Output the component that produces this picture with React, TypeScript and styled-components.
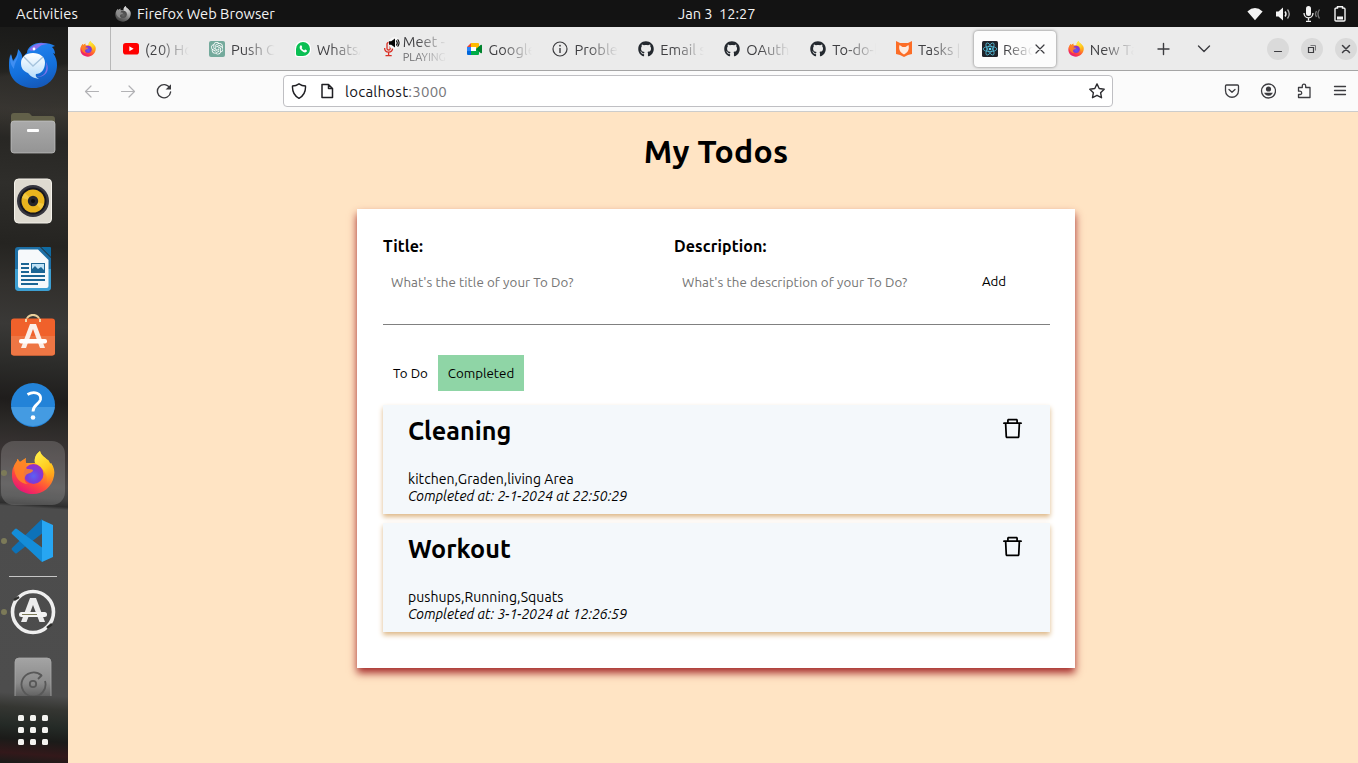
import React from "react";
import styled, { createGlobalStyle, css } from "styled-components";
import { FaGithub } from "react-icons/fa";
import { AiOutlineDelete } from "react-icons/ai";
import { SiOpenai } from "react-icons/si";

const GlobalStyle = createGlobalStyle`
  * { box-sizing: border-box; }
  body { margin: 0; overflow: hidden; font-family: Ubuntu, "Noto Sans", "Open Sans", sans-serif; }
  button, input { font: inherit; border: 0; background: none; padding: 0; margin: 0; outline: 0; }
  svg { display: block; flex: none; }
`;

/* ---------- Desktop shell ---------- */

const Desktop = styled.div`
  width: 1358px;
  height: 763px;
  display: grid;
  grid-template: 27px 736px / 68px 1290px;
  overflow: hidden;
`;

const TopBar = styled.header`
  grid-column: 1 / 3;
  display: grid;
  grid-template-columns: 1fr auto 1fr;
  align-items: center;
  background: #131313;
  color: #f2f2f2;
  font-size: 14.667px;
  line-height: 27px;
`;

const TopLeft = styled.div`
  display: flex;
  align-items: center;
  padding-left: 16px;
  letter-spacing: 0.2px;
`;

const ActiveApp = styled.div`
  display: flex;
  align-items: center;
  gap: 6px;
  margin-left: 37px;
  letter-spacing: 0;
`;

const Clock = styled.div`
  white-space: pre;
  padding-left: 75px;
  width: 153px;
  margin-right: -1px;
  letter-spacing: -0.05px;
`;

const Status = styled.div`
  display: flex;
  justify-content: flex-end;
  align-items: center;
  gap: 12px;
  padding-right: 9px;
`;

const Dock = styled.aside`
  display: flex;
  flex-direction: column;
  align-items: center;
  padding-top: 4px;
  background:
    linear-gradient(172deg, transparent 0 45px, #35333080 50px 80px, transparent 96px) 0 0 / 68px 130px no-repeat,
    linear-gradient(184deg, #1a1a19 0, #22221f 45px, #3a3732 85px, #282724 115px, #2f2e2b 160px, #252421 220px, #32302d 260px, #3a3937 300px, #2b2b29 340px, #1f1d1c 375px, #2c2a28 400px, #3b3535 430px, #4a4848 460px, #3f3f3f 472px, #2e2e2e 479px, #4c4c4c 482px, #4d4d4d 668px, #353632 682px, #242a26 700px, #1b1b19 714px, #33181a 728px, #1b1b19 738px);
`;

const DockSlot = styled.div<{ $running?: boolean; $clip?: boolean }>`
  position: relative;
  width: 68px;
  height: ${(p) => (p.$clip ? "50px" : "68px")};
  flex: none;
  display: flex;
  align-items: ${(p) => (p.$clip ? "flex-start" : "center")};
  justify-content: center;
  overflow: hidden;
  padding: ${(p) => (p.$clip ? "10px 2px 0 0" : "0 2px 0 0")};
  ${(p) =>
    p.$running &&
    css`
      &::before {
        content: "";
        position: absolute;
        left: 1px;
        top: 31px;
        width: 6px;
        height: 6px;
        border-radius: 50%;
        background: #7c7a58;
      }
    `}
`;

const DockHighlight = styled.div`
  width: 64px;
  height: 64px;
  border-radius: 13px;
  display: flex;
  align-items: center;
  justify-content: center;
  background: #ffffff2b;
`;

const DockRule = styled.div`
  width: 48px;
  height: 1px;
  margin: 1px 2px 1px 0;
  background: #c6c6c6;
  flex: none;
`;

const AppGrid = styled.div`
  display: grid;
  grid-template-columns: repeat(3, 6px);
  gap: 6px;
  margin: 19px 2px 0 0;
`;

const AppDot = styled.i`
  width: 6px;
  height: 6px;
  border-radius: 1.5px;
  background: #f3f3f0;
`;

/* ---------- Browser chrome ---------- */

const Browser = styled.div`
  display: flex;
  flex-direction: column;
  background: #fbfbfb;
  min-width: 0;
`;

const TabStrip = styled.div`
  height: 44px;
  display: flex;
  align-items: center;
  background: #ebebeb;
  border-bottom: 1px solid #a5a5a5;
`;

const PinnedTab = styled.div`
  width: 43px;
  height: 43px;
  display: flex;
  align-items: center;
  padding-left: 12px;
  border-right: 1px solid #b8b8b8;
  margin-right: 4px;
`;

const Tab = styled.div<{ $active?: boolean }>`
  width: 81.9px;
  height: 36px;
  flex: none;
  margin-right: 4px;
  padding: 0 8px;
  display: flex;
  align-items: center;
  gap: 6px;
  border-radius: 4px;
  color: #3f3f42;
  ${(p) =>
    p.$active &&
    css`
      gap: 5px;
      padding-right: 10px;
      background: #fcfcfc;
      box-shadow: 0 0 3px #00000080;
    `}
`;

const TabIcon = styled.span`
  position: relative;
  width: 16px;
  height: 16px;
  flex: none;
`;

const TabText = styled.div<{ $short?: boolean; $double?: boolean }>`
  flex: 1;
  min-width: 0;
  overflow: hidden;
  white-space: nowrap;
  padding-top: ${(p) => (p.$double ? "0" : "2px")};
  margin-right: ${(p) => (p.$short ? "-4px" : "0")};
  font-size: 14.667px;
  line-height: 20px;
  mask-image: linear-gradient(to right, #000 ${(p) => (p.$short ? "10%" : "30%")}, transparent 100%);
`;

const TabStatus = styled.div`
  font-size: 11px;
  line-height: 13px;
  color: #6b6b6e;
`;

const TitleLine = styled.div<{ $tight?: boolean }>`
  line-height: ${(p) => (p.$tight ? "18px" : "20px")};
`;

const SoundBadge = styled.span`
  position: absolute;
  left: 7px;
  top: -5px;
`;

const TabActions = styled.div`
  display: flex;
  align-items: center;
  gap: 25px;
  margin-left: 9px;
`;

const WindowButtons = styled.div`
  display: flex;
  gap: 12px;
  margin-left: 55px;
`;

const WindowButton = styled.button`
  width: 22px;
  height: 22px;
  flex: none;
  border-radius: 50%;
  background: #dadada;
  display: flex;
  align-items: center;
  justify-content: center;
`;

const NavBar = styled.div`
  height: 41px;
  display: flex;
  align-items: center;
  border-bottom: 1px solid #cccccc;
  padding: 0 10px 0 16px;
`;

const NavButtons = styled.div`
  display: flex;
  gap: 20px;
  width: 199px;
`;

const UrlBar = styled.div`
  width: 830px;
  height: 32px;
  display: flex;
  align-items: center;
  border: 1px solid #bfbfc3;
  border-radius: 4px;
  background: #fff;
  padding: 0 7px;
`;

const UrlPageIcon = styled.span`
  margin-left: 12px;
`;

const UrlText = styled.div`
  flex: 1;
  margin-left: 10px;
  padding-top: 1px;
  font-size: 15px;
  letter-spacing: 0.25px;
  line-height: 20px;
  color: #15141a;
`;

const Port = styled.span`
  color: #76767a;
`;

const Tools = styled.div`
  display: flex;
  gap: 20px;
  margin-left: auto;
`;

/* ---------- Todo page ---------- */

const Page = styled.main`
  flex: 1;
  background: #ffe4c4;
  color: #000;
  display: flex;
  flex-direction: column;
  align-items: center;
  padding: 19px 0 0 6px;
`;

const PageTitle = styled.h1`
  margin: 0 0 38px;
  font-size: 32px;
  line-height: 40px;
  letter-spacing: 0.2px;
`;

const Card = styled.section`
  width: 718px;
  height: 459px;
  padding: 27px 25px 36px 26px;
  background: #fff;
  box-shadow: 0 5px 8px 0 brown;
`;

const Form = styled.form`
  display: grid;
  grid-template-columns: 291px 289px 1fr;
  height: 89px;
  border-bottom: 1px solid gray;
`;

const Field = styled.label`
  display: flex;
  flex-direction: column;
  gap: 8px;
  font-weight: 700;
  font-size: 16px;
  line-height: 20px;
  letter-spacing: 0.12px;
`;

const TextInput = styled.input`
  height: 36px;
  width: 260px;
  padding: 0 8px;
  font-weight: 400;
  font-size: 13.333px;
  letter-spacing: 0.06px;
  &::placeholder { color: #757575; opacity: 1; }
`;

const AddButton = styled.button`
  height: 36px;
  width: 44px;
  margin: 27px 0 0 9px;
  font-size: 13.333px;
`;

const Filters = styled.div`
  display: flex;
  margin: 30px 0 14px;
`;

const FilterButton = styled.button<{ $width: number; $active?: boolean }>`
  width: ${(p) => p.$width}px;
  height: 36px;
  font-size: 13.333px;
  background: ${(p) => (p.$active ? "#8fd5a6" : "transparent")};
`;

const List = styled.div`
  display: flex;
  flex-direction: column;
  gap: 9px;
`;

const Item = styled.article`
  height: 109px;
  display: flex;
  justify-content: space-between;
  padding: 9px 25px 9px;
  background: #f4f8fb;
  box-shadow: 0 3px 5px 0 burlywood;
`;

const ItemTitle = styled.h3`
  margin: 0 0 23px;
  font-size: 25.2px;
  line-height: 34px;
  letter-spacing: 0.03px;
`;

const ItemLine = styled.p<{ $italic?: boolean }>`
  margin: 0;
  font-size: 14px;
  line-height: 17px;
  font-style: ${(p) => (p.$italic ? "italic" : "normal")};
  letter-spacing: ${(p) => (p.$italic ? "0" : "0.06px")};
`;

const DeleteIcon = styled(AiOutlineDelete)`
  margin-top: 2px;
  font-size: 25px;
`;

/* ---------- Icons ---------- */

function Firefox({ size, gray }: { size: number; gray?: boolean }) {
  const id = React.useId().replace(/:/g, "");
  return (
    <svg width={size} height={size} viewBox="0 0 44 44" style={gray ? { filter: "grayscale(1) brightness(0.95)" } : undefined}>
      <defs>
        <linearGradient id={`${id}b`} x1=".8" y1="0" x2=".25" y2="1">
          <stop offset="0" stopColor="#ffe226" />
          <stop offset=".4" stopColor="#ff9a1f" />
          <stop offset=".7" stopColor="#ff4a3d" />
          <stop offset="1" stopColor="#e5107e" />
        </linearGradient>
        <linearGradient id={`${id}t`} x1="0" y1="0" x2=".4" y2="1">
          <stop offset="0" stopColor="#fff44f" />
          <stop offset=".6" stopColor="#ffcb1f" />
          <stop offset="1" stopColor="#ff980e" stopOpacity="0" />
        </linearGradient>
        <radialGradient id={`${id}g`} cx=".5" cy=".6" r=".6">
          <stop offset="0" stopColor="#5a62f5" />
          <stop offset=".5" stopColor="#7540dc" />
          <stop offset="1" stopColor="#a12cc0" />
        </radialGradient>
      </defs>
      <path d="M3 15c1-2 2-4 3-5 0-1 0-2 1-2 0 1 1 2 2 3 2-1 4-3 6-4-1 2 0 4 0 5l9 0c-1-5 1-9 5-12 1 5 6 7 9 10 0 1 1 2 1 3l1-1c3 4 4 8 3 13-2 11-11 18-21 18C10 43 1 35 1 25c0-4 0-7 2-10z" fill={`url(#${id}b)`} />
      <path d="M24 12c-1-5 1-9 5-12 1 5 6 7 9 10 0 1 1 2 1 3l1-1c3 6 3 13 1 19-1 3-4 5-7 6 3-5 3-12-1-17-2-3-6-5-9-8z" fill={`url(#${id}t)`} />
      <circle cx="22.500" cy="23" r="10" fill={`url(#${id}g)`} />
      <path d="M3 15c1-2 2-4 3-5 0-1 0-2 1-2 0 1 1 2 2 3 2-1 4-3 6-4-1 2 0 5 1 7-1 2-1 3 0 4 2 0 5 0 6 1 0 3-5 3-7 5-2 3-2 7 2 9-8 0-14-7-14-18z" fill="#ff8426" opacity=".85" />
    </svg>
  );
}

const Thunderbird = () => (
  <svg width="48" height="48" viewBox="0 0 48 48">
    <defs>
      <linearGradient id="tbBody" x1=".3" y1="0" x2=".6" y2="1">
        <stop offset="0" stopColor="#2585f0" />
        <stop offset=".6" stopColor="#1370dc" />
        <stop offset="1" stopColor="#1558b8" />
      </linearGradient>
      <linearGradient id="tbMail" x1="0" y1="0" x2="0" y2="1">
        <stop offset="0" stopColor="#fff" />
        <stop offset="1" stopColor="#b5dcfa" />
      </linearGradient>
    </defs>
    <path d="M9 8c4 4 5 8 4 12 1-4 3-7 5-8 0-6 8-11 16-10 5 0 9 1 12 3l-3 1c2 2 3 4 3 7l-2-1c3 4 4 8 4 12 0 13-10 23-23 23C11 47 0 39 0 25c0-5 0-9 2-12l2 7c2-3 5-6 5-12z" fill="url(#tbBody)" />
    <path d="M20 9c4-6 11-8 19-6-8 0-9 4-13 6-2 1-4 1-6 0z" fill="#8d70ee" />
    <path d="M2 14l2 7c3-3 5-6 5-12 2 8-4 12-4 19-3-4-5-8-3-14z" fill="#3f8ef2" />
    <path d="M26 36c8 0 13-4 11-15 5 9-1 16-11 15z" fill="#7f73e8" />
    <path d="M24 12c7 0 12 4 12 9.500 0 7-4 11.500-9 11.500-1 2 1 4 3 5-6-1-9-3-11-6-5-2-7-5-7-10 0-6 5-10 12-10z" fill="url(#tbMail)" />
    <path d="M15 16l9 9 10-9" fill="none" stroke="#a5c3dd" strokeWidth="1.300" />
    <circle cx="25" cy="8" r="1.400" fill="#fff" />
  </svg>
);

const Files = () => (
  <svg width="46" height="42" viewBox="0 0 46 42">
    <defs>
      <linearGradient id="flF" x1="0" y1="0" x2="0" y2="1">
        <stop offset="0" stopColor="#aaaaaa" />
        <stop offset="1" stopColor="#949494" />
      </linearGradient>
    </defs>
    <path d="M1 10V4q0-3 3-3h14q2 0 3 2l1 1h20q3 0 3 3v6H1z" fill="#626049" />
    <rect x="1" y="9" width="44" height="32" rx="3" fill="url(#flF)" stroke="#c4c4c4" strokeWidth=".7" />
    <rect x="17" y="17" width="12" height="3" rx="1" fill="#fff" />
  </svg>
);

const Rhythmbox = () => (
  <svg width="38" height="46" viewBox="0 0 38 46">
    <rect x=".5" y="1" width="37" height="44" rx="4" fill="#dedad0" stroke="#f4f1ea" />
    <circle cx="19" cy="23" r="16" fill="#36363f" />
    <circle cx="19" cy="23" r="13.500" fill="#17171d" />
    <circle cx="19" cy="23" r="11.500" fill="#e9b41e" />
    <path d="M19 23L8 20a11.500 11.500 0 0 1 3-5zM19 23l11 3a11.500 11.500 0 0 1-3 5z" fill="#f9d657" opacity=".6" />
    <circle cx="19" cy="23" r="5.200" fill="#25252a" />
    <circle cx="19" cy="23" r="2" fill="#0c0c0e" />
  </svg>
);

const Writer = () => (
  <svg width="38" height="46" viewBox="0 0 38 46">
    <path d="M4 1h22l11 11v29q0 4-4 4H5q-4 0-4-4V4q0-3 3-3z" fill="#1d6fa5" />
    <path d="M1 23h36v18q0 4-4 4H5q-4 0-4-4z" fill="#3d9fd2" />
    <path d="M6 3.500h18L34.500 14v26q0 2-2 2H6q-2 0-2-2V5.500q0-2 2-2z" fill="#f6f9fb" />
    <path d="M27 1h9q1 0 1 1v9z" fill="#0f6ba3" />
    <g fill="#1b6594">
      <path d="M7 17h8v2H7zM7 21h8v2H7zM7 25h8v2H7zM7 29h24v2H7zM7 33h24v2H7zM7 37h17v2H7z" />
    </g>
    <rect x="17.500" y="17.500" width="13" height="9" fill="#bfe2f6" stroke="#1b6594" />
    <path d="M18 26v-3l3-3 3 3 3-2 3 3v2z" fill="#1b6594" />
  </svg>
);

const Software = () => (
  <svg width="46" height="46" viewBox="0 3 46 46">
    <path d="M16 11c0-9.500 14-9.500 14 0" fill="none" stroke="#e9cf9b" strokeWidth="2" />
    <rect x="1" y="7.500" width="44" height="37" rx="3" fill="#f0612b" />
    <path d="M1 25h44v16.500q0 3-3 3H4q-3 0-3-3z" fill="#ee7644" />
    <path d="M16 8v3M30 8v3" stroke="#f0d9ae" strokeWidth="2" />
    <path d="M20 13h6l9 24h-5l-7-19-7 19h-5z" fill="#fbeee7" />
    <rect x="9" y="28" width="28" height="4.500" rx="2" fill="#fff" />
  </svg>
);

const Help = () => (
  <svg width="46" height="46" viewBox="0 0 46 46">
    <circle cx="23" cy="23" r="22" fill="#2383d8" />
    <path d="M1.200 25h43.600A22 22 0 0 1 1.200 25z" fill="#449be2" />
    <path d="M17.500 12.500c7-4 14-1 13 5-1 5-7.500 5-7.500 12" fill="none" stroke="#fff" strokeWidth="2.800" />
    <circle cx="23" cy="35.500" r="2.300" fill="#fff" />
  </svg>
);

const VsCode = () => (
  <svg width="46" height="46" viewBox="0 0 46 46">
    <path d="M32 1L2 30q-1 1 0 2l3 3q1 1 2 0L34 14z" fill="#0d72b8" />
    <path d="M7 11q-1-1-2 0l-3 3q-1 1 0 2l30 28 2-13z" fill="#148dd8" />
    <path d="M32 2l11 5v32l-11 5z" fill="#27a6f2" />
  </svg>
);

const Updater = () => (
  <svg width="48" height="48" viewBox="0 0 48 48">
    <circle cx="24" cy="24" r="20.500" fill="none" stroke="#efefef" strokeWidth="3.600" />
    <path d="M5 12l5 -3M38 40l5-4" stroke="#2e2e2c" strokeWidth="2.500" />
    <path d="M21 10h6l9 24h-5.500L24 17l-6.500 17H12z" fill="#ececec" />
    <rect x="10" y="24" width="28" height="5" rx="2.500" fill="#f4f4f4" />
    <path d="M13 26.500h15" stroke="#7c7a58" />
  </svg>
);

const Disks = () => (
  <svg width="38" height="52" viewBox="0 0 38 52">
    <defs>
      <linearGradient id="dkF" x1="0" y1="0" x2="0" y2="1">
        <stop offset="0" stopColor="#a4a4a4" />
        <stop offset=".5" stopColor="#8a8a8a" />
        <stop offset=".76" stopColor="#626262" />
      </linearGradient>
    </defs>
    <path d="M1 52V6q0-4 4-4h28q4 0 4 4v46z" fill="url(#dkF)" stroke="#a9a9a9" strokeWidth=".8" />
    <g fill="none" stroke="#585858" strokeWidth="1.800">
      <path d="M27.500 19.500A12 12 0 1 0 31 25" />
      <circle cx="19" cy="28" r="3.200" />
      <path d="M24 23l4-4" />
    </g>
  </svg>
);

const YouTube = () => (
  <svg width="16" height="16" viewBox="0 0 16 16">
    <rect x="0" y="2" width="16" height="11.500" rx="2.800" fill="#f00" />
    <path d="M6.300 5.300v5l4.300-2.500z" fill="#fff" />
  </svg>
);

const ChatBox = styled.span`
  width: 16px;
  height: 16px;
  border-radius: 2px;
  display: grid;
  place-items: center;
  background: #74aa9c;
  color: #fff;
  font-size: 12.5px;
`;

const WhatsBox = styled.span`
  width: 16px;
  height: 16px;
  display: grid;
  place-items: center;
  border-radius: 7px 7px 7px 2px;
  background: #fff;
`;

const WhatsDisc = styled.span`
  width: 14px;
  height: 14px;
  display: grid;
  place-items: center;
  border-radius: 50% 50% 50% 15%;
  background: #0abf53;
`;

const WhatsApp = () => (
  <WhatsBox>
    <WhatsDisc>
      <svg width="14" height="14" viewBox="0 0 14 14">
        <path d="M4.600 3.300q.8-.4 1.200.6l.4 1q.1.500-.6 1.200 1 1.700 2.600 2.300.7-1 1.200-.8l1.200.6q.7.400.2 1.200-1.300 1.600-3.400.7Q4.600 8.700 3.700 6.200q-.4-1.900.9-2.900z" fill="#fff" />
      </svg>
    </WhatsDisc>
  </WhatsBox>
);

const MicRed = () => (
  <svg width="16" height="16" viewBox="0 0 16 16" fill="none" stroke="#d93025" strokeWidth="1.300">
    <rect x="6" y="1.500" width="3.200" height="7.500" rx="1.600" />
    <path d="M3.600 7c0 5.500 8 5.500 8 0M7.600 11.200v3.200M4.500 14.600h6.200" />
  </svg>
);

const Sound = () => (
  <svg width="14" height="14" viewBox="0 0 14 14">
    <circle cx="6.500" cy="7" r="6" fill="#f7f7f7" />
    <path d="M1 5.200h2.200L7 2.500v9L3.200 8.800H1z" fill="#050505" />
    <path d="M8.300 4.500q2 2.500 0 5M9.600 3.400q3 3.600 0 7.200" stroke="#050505" fill="none" strokeWidth="1.100" />
  </svg>
);

const Meet = () => (
  <svg width="16" height="16" viewBox="0 0 16 16">
    <path d="M0 6l4-4v4z" fill="#ea4335" />
    <path d="M0 6h4v5H0z" fill="#2684fc" />
    <path d="M4 2h7q1 0 1 1v3l-3 2V6H4z" fill="#ffba00" />
    <path d="M0 10h4v4H1q-1 0-1-1z" fill="#0066da" />
    <path d="M4 10h5V8l3-2v7q0 1-1 1H4z" fill="#00ac47" />
    <path d="M9 8l4.500-4q1.500-.8 1.500.5v7q0 1.300-1.500.5z" fill="#00832d" />
    <path d="M4 6h5v4H4z" fill="#fff" />
  </svg>
);

const Info = () => (
  <svg width="16" height="16" viewBox="0 0 16 16">
    <circle cx="8" cy="8" r="7" fill="none" stroke="#3c3c3f" strokeWidth="1.200" />
    <path d="M8 7v5" stroke="#3c3c3f" strokeWidth="1.400" />
    <circle cx="8" cy="4.700" r=".9" fill="#3c3c3f" />
  </svg>
);

const Fox = () => (
  <svg width="16" height="16" viewBox="0 0 16 16">
    <path d="M0 0l4 2h8l4-2v13l-4 1-4 2-4-2-4-1z" fill="#fc6d26" />
    <path d="M3.500 4l3 2h3l3-2c1 4 0 7-4.500 9.500C3.500 11 2.500 8 3.500 4z" fill="#fdebe0" />
  </svg>
);

const ReactMark = () => (
  <svg width="16" height="16" viewBox="0 0 16 16">
    <rect width="16" height="16" rx="1.500" fill="#20232a" />
    <g fill="none" stroke="#53bcd8" strokeWidth=".8">
      <ellipse cx="8" cy="8" rx="6.800" ry="2.600" />
      <ellipse cx="8" cy="8" rx="6.800" ry="2.600" transform="rotate(60 8 8)" />
      <ellipse cx="8" cy="8" rx="6.800" ry="2.600" transform="rotate(120 8 8)" />
    </g>
    <circle cx="8" cy="8" r="1.300" fill="#61dafb" />
  </svg>
);

function Line({ d, color = "#3c3c40", width = 1.3, size = 16 }: { d: string; color?: string; width?: number; size?: number }) {
  return (
    <svg width={size} height={size} viewBox={`0 0 ${size} ${size}`} fill="none" stroke={color} strokeWidth={width} strokeLinecap="round" strokeLinejoin="round">
      <path d={d} />
    </svg>
  );
}

const Reload = () => (
  <svg width="16" height="16" viewBox="0 0 16 16">
    <path d="M13.800 5A6.600 6.600 0 1 0 14.600 9" fill="none" stroke="#3a3a3e" strokeWidth="1.400" strokeLinecap="round" />
    <path d="M15 1.200V6.600H9.600z" fill="#3a3a3e" />
  </svg>
);

const Account = () => (
  <svg width="16" height="16" viewBox="0 0 16 16">
    <circle cx="8.500" cy="8" r="7" fill="none" stroke="#3c3c40" strokeWidth="1.300" />
    <circle cx="8.500" cy="6" r="2.600" fill="#3c3c40" />
    <path d="M4.100 9.800h8.800q-1.400 3-4.400 3t-4.400-3z" fill="#3c3c40" />
  </svg>
);

const StatusIcons = () => (
  <Status>
    <svg width="16" height="16" viewBox="0 0 16 16">
      <path d="M8 14.300L.4 5.500Q8-1.300 15.600 5.500z" fill="#f4f4f4" />
    </svg>
    <svg width="16" height="16" viewBox="0 0 16 16">
      <path d="M1 5.500h2.500L8 1.500v13L3.500 10.500H1z" fill="#f4f4f4" />
      <path d="M10 5.500q2 2.500 0 5" stroke="#f4f4f4" fill="none" strokeWidth="1.400" />
      <path d="M12.500 3.500q3.500 4.500 0 9" stroke="#a9a9a9" fill="none" strokeWidth="1.300" />
    </svg>
    <svg width="18" height="16" viewBox="0 0 18 16">
      <rect x="3" y="0" width="5" height="10" rx="2.500" fill="#f4f4f4" />
      <path d="M1 7c0 6.500 9 6.500 9 0M5.500 12v2.500M3 15.300h5" stroke="#f4f4f4" fill="none" strokeWidth="1.300" />
      <path d="M13.500 5q-2 3 0 6M16.500 3.500q-3 4.500 0 9" stroke="#777" fill="none" strokeWidth="1.300" />
    </svg>
    <svg width="16" height="16" viewBox="0 0 16 16">
      <path d="M4.500 2V.8h5V2h1q1.500 0 1.500 1v11q0 1-1 1H3q-1 0-1-1V3q0-1 1.500-1z" fill="none" stroke="#f4f4f4" strokeWidth="1.400" />
      <path d="M4 10.500h6v3H4z" fill="#f4f4f4" />
    </svg>
  </Status>
);

/* ---------- Data ---------- */

const githubIcon = <FaGithub size={16} color="#24292f" />;

const tabs: { title: string; icon: React.ReactNode; status?: string; active?: boolean }[] = [
  { title: "(20) Ho", icon: <YouTube /> },
  { title: "Push C", icon: <ChatBox><SiOpenai /></ChatBox> },
  { title: "WhatsA", icon: <WhatsApp /> },
  { title: "Meet -", icon: <><MicRed /><SoundBadge><Sound /></SoundBadge></>, status: "PLAYING" },
  { title: "Google", icon: <Meet /> },
  { title: "Proble", icon: <Info /> },
  { title: "Email s", icon: githubIcon },
  { title: "OAuth", icon: githubIcon },
  { title: "To-do-l", icon: githubIcon },
  { title: "Tasks |", icon: <Fox /> },
  { title: "Reac", icon: <ReactMark />, active: true },
  { title: "New Ta", icon: <Firefox size={16} /> },
];

const todos = [
  { title: "Cleaning", description: "kitchen,Graden,living Area", completed: "2-1-2024 at 22:50:29" },
  { title: "Workout", description: "pushups,Running,Squats", completed: "3-1-2024 at 12:26:59" },
];

export default function App() {
  return (
    <Desktop>
      <GlobalStyle />
      <TopBar>
        <TopLeft>
          Activities
          <ActiveApp>
            <Firefox size={16} gray />
            Firefox Web Browser
          </ActiveApp>
        </TopLeft>
        <Clock>{"Jan 3  12:27"}</Clock>
        <StatusIcons />
      </TopBar>

      <Dock>
        <DockSlot><Thunderbird /></DockSlot>
        <DockSlot><Files /></DockSlot>
        <DockSlot><Rhythmbox /></DockSlot>
        <DockSlot><Writer /></DockSlot>
        <DockSlot><Software /></DockSlot>
        <DockSlot><Help /></DockSlot>
        <DockSlot $running>
          <DockHighlight><Firefox size={44} /></DockHighlight>
        </DockSlot>
        <DockSlot $running><VsCode /></DockSlot>
        <DockRule />
        <DockSlot $running><Updater /></DockSlot>
        <DockSlot $clip><Disks /></DockSlot>
        <AppGrid>
          {Array.from({ length: 9 }, (_, i) => <AppDot key={i} />)}
        </AppGrid>
      </Dock>

      <Browser>
        <TabStrip>
          <PinnedTab><Firefox size={16} /></PinnedTab>
          {tabs.map((tab) => (
            <Tab key={tab.title} $active={tab.active}>
              <TabIcon>{tab.icon}</TabIcon>
              <TabText $short={tab.active} $double={!!tab.status}>
                <TitleLine $tight={!!tab.status}>{tab.title}</TitleLine>
                {tab.status && <TabStatus>{tab.status}</TabStatus>}
              </TabText>
              {tab.active && <Line size={12} width={1.2} d="M2 2l8 8M10 2l-8 8" />}
            </Tab>
          ))}
          <TabActions>
            <Line d="M8.500 2.500v11M3 8h11" width={1.4} />
            <Line d="M2.500 5l5.500 5.500L13.500 5" width={1.4} />
          </TabActions>
          <WindowButtons>
            <WindowButton><Line d="M4.500 10.500h7" width={1.1} /></WindowButton>
            <WindowButton>
              <svg width="16" height="16" viewBox="0 0 16 16" fill="none" stroke="#3c3c40">
                <path d="M4.500 6.500h5v5h-5z" strokeWidth="1.200" />
                <path d="M6.500 4.500h5v5" stroke="#77777a" />
              </svg>
            </WindowButton>
            <WindowButton><Line d="M4.500 4.500l7 7M11.500 4.500l-7 7" width={1.5} /></WindowButton>
          </WindowButtons>
        </TabStrip>

        <NavBar>
          <NavButtons>
            <Line color="#b2b2b5" d="M1.500 8.500h13M7 3L1.500 8.500 7 14" width={1.2} />
            <Line color="#b2b2b5" d="M14.500 8.500h-13M9 3L14.500 8.500 9 14" width={1.2} />
            <Reload />
          </NavButtons>
          <UrlBar>
            <Line color="#1f1f23" width={1.4} d="M8 .8q3 2 6.500 2.200.5 8.500-6.500 12.300Q1 11.500 1.500 3 5 2.800 8 .8z" />
            <UrlPageIcon>
              <Line color="#1f1f23" width={1.5} d="M3 1.500h6.500l4 4v9H3zM9.500 1.500v4h4" />
            </UrlPageIcon>
            <UrlText>localhost<Port>:3000</Port></UrlText>
            <Line color="#2c2c30" width={1.4} d="M8 .9l2.200 4.600 5 .7-3.600 3.500.9 5L8 12.300l-4.500 2.400.9-5L.8 6.200l5-.7z" />
          </UrlBar>
          <Tools>
            <Line width={1.3} d="M2.500 2h11q1 0 1 1v4.500c0 9-13 9-13 0V3q0-1 1-1zM5 6.500L8 9.300l3-2.800" />
            <Account />
            <Line width={1.3} d="M2.500 4.500h3.800V3q0-1.800 1.700-1.800T9.700 3v1.500H14v10H2.500v-3H4q1.700 0 1.700-1.600T4 8.200H2.500z" />
            <Line width={1.3} d="M2.500 3.500h11M2.500 7.500h11M2.500 11.500h11" />
          </Tools>
        </NavBar>

        <Page>
          <PageTitle>My Todos</PageTitle>
          <Card>
            <Form>
              <Field>
                Title:
                <TextInput placeholder="What's the title of your To Do?" />
              </Field>
              <Field>
                Description:
                <TextInput placeholder="What's the description of your To Do?" />
              </Field>
              <AddButton type="button">Add</AddButton>
            </Form>
            <Filters>
              <FilterButton $width={55}>To Do</FilterButton>
              <FilterButton $width={86} $active>Completed</FilterButton>
            </Filters>
            <List>
              {todos.map((todo) => (
                <Item key={todo.title}>
                  <div>
                    <ItemTitle>{todo.title}</ItemTitle>
                    <ItemLine>{todo.description}</ItemLine>
                    <ItemLine $italic>Completed at: {todo.completed}</ItemLine>
                  </div>
                  <DeleteIcon />
                </Item>
              ))}
            </List>
          </Card>
        </Page>
      </Browser>
    </Desktop>
  );
}
